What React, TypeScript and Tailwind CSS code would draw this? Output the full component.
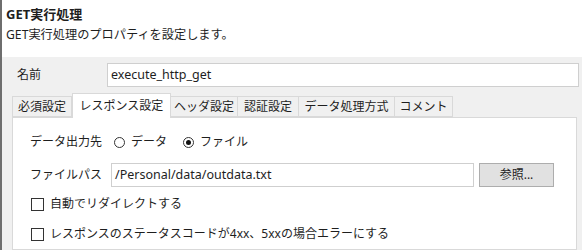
import { ReactNode } from "react";

const tabs = [
  { label: "必須設定", w: "w-[60px]" },
  { label: "レスポンス設定", w: "w-[99px]", active: true },
  { label: "ヘッダ設定", w: "w-[68px]" },
  { label: "認証設定", w: "w-[62px]" },
  { label: "データ処理方式", w: "w-[97px]" },
  { label: "コメント", w: "w-[59px]" },
];

const Radio = ({ checked, children }: { checked?: boolean; children: ReactNode }) => (
  <label className="flex items-center gap-[6px]">
    <span className="flex h-[11px] w-[11px] items-center justify-center rounded-full border border-[#333]">
      {checked && <span className="h-[5px] w-[5px] rounded-full bg-[#111]" />}
    </span>
    <span>{children}</span>
  </label>
);

const Check = ({ children }: { children: ReactNode }) => (
  <label className="flex h-[20px] items-center gap-[6px] pl-[1px]">
    <span className="h-[13px] w-[13px] border border-[#333] bg-white" />
    <span>{children}</span>
  </label>
);

export default function App() {
  return (
    <div className="flex h-[250px] w-[582px] flex-col overflow-hidden border-l-2 border-[#6e6e6e] bg-[#f0f0f0] font-['Noto_Sans','Noto_Sans_CJK_JP',sans-serif] text-[12px] text-[#1e1e1e]">
      {/* header */}
      <div className="h-[57px] bg-white pl-[4px] pt-[6px]">
        <div className="text-[13px] font-bold leading-[16px]">GET実行処理</div>
        <div className="mt-[5px] text-[12.2px] leading-[16px]">GET実行処理のプロパティを設定します。</div>
      </div>

      <div className="flex flex-1 flex-col pl-[10px] pr-[3px]">
        {/* name */}
        <div className="mt-[6px] flex h-[24px] items-center">
          <div className="w-[95px] pl-[5px]">名前</div>
          <div className="flex h-[24px] flex-1 items-center border border-[#cfcfcf] bg-white pl-[3px] text-[12.5px]">
            execute_http_get
          </div>
        </div>

        {/* tabs */}
        <div className="relative z-10 mt-[6px] flex items-end">
          {tabs.map((t) =>
            t.active ? (
              <div
                key={t.label}
                className={`${t.w} -mb-px flex h-[25px] items-center justify-center border border-b-0 border-[#d9d9d9] bg-white`}
              >
                {t.label}
              </div>
            ) : (
              <div
                key={t.label}
                className={`${t.w} -ml-px flex h-[21px] items-center justify-center border border-[#d9d9d9] bg-[#f0f0f0] first:ml-0`}
              >
                {t.label}
              </div>
            )
          )}
        </div>

        {/* panel */}
        <div className="mr-[2px] flex-1 border border-[#d9d9d9] bg-white pl-[17px] pr-[22px] pt-[12px]">
          <div className="flex h-[24px] items-center">
            <div className="w-[84px]">データ出力先</div>
            <Radio>データ</Radio>
            <div className="ml-[16px]">
              <Radio checked>ファイル</Radio>
            </div>
          </div>

          <div className="mt-[9px] flex h-[24px] items-center">
            <div className="w-[81px]">ファイルパス</div>
            <div className="flex h-[24px] w-[363px] items-center border border-[#cfcfcf] bg-white pl-[3px] text-[12.5px]">
              /Personal/data/outdata.txt
            </div>
            <button className="ml-[5px] flex h-[24px] w-[75px] items-center justify-center border border-[#adadad] bg-[#e1e1e1]">
              参照...
            </button>
          </div>

          <div className="mt-[7px]">
            <Check>自動でリダイレクトする</Check>
          </div>
          <div className="mt-[10px]">
            <Check>レスポンスのステータスコードが4xx、5xxの場合エラーにする</Check>
          </div>
        </div>
      </div>
    </div>
  );
}
